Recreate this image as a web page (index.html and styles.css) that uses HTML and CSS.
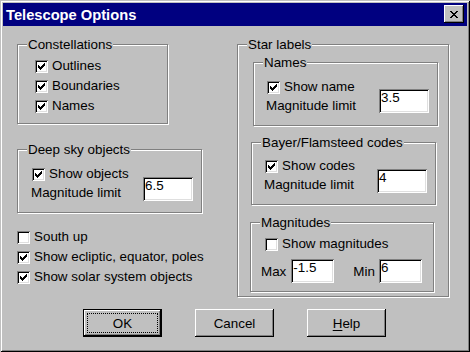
FILE: index.html
```html
<!DOCTYPE html>
<html lang="en">
<head>
<meta charset="utf-8">
<title>Telescope Options</title>
<link rel="stylesheet" href="styles.css">
</head>
<body>
<svg class="sprite" width="0" height="0" aria-hidden="true">
  <symbol id="chk" viewBox="0 0 7 7">
    <path d="M6 0h1v1h-1zM5 1h2v1h-2zM0 2h1v1h-1zM4 2h3v1h-3zM0 3h2v1h-2zM3 3h3v1h-3zM0 4h5v1h-5zM1 5h3v1h-3zM2 6h1v1h-1z"/>
  </symbol>
</svg>
<div class="window">
  <div class="titlebar">
    <span class="title">Telescope Options</span>
    <span class="close"><svg width="8" height="7" viewBox="0 0 8 7"><path d="M0 0h2v1H0zM6 0h2v1H6zM1 1h2v1H1zM5 1h2v1H5zM2 2h4v1H2zM3 3h2v1H3zM2 4h4v1H2zM1 5h2v1H1zM5 5h2v1H5zM0 6h2v1H0zM6 6h2v1H6z"/></svg></span>
  </div>
  <div class="body">
    <div class="col-left">
      <fieldset class="group g-const">
        <legend>Constellations</legend>
        <div class="inner">
          <label class="check"><span class="box"><svg><use href="#chk"/></svg></span>Outlines</label>
          <label class="check"><span class="box"><svg><use href="#chk"/></svg></span>Boundaries</label>
          <label class="check"><span class="box"><svg><use href="#chk"/></svg></span>Names</label>
        </div>
      </fieldset>
      <fieldset class="group g-deep">
        <legend>Deep sky objects</legend>
        <div class="inner limit">
          <div class="stack">
            <label class="check"><span class="box"><svg><use href="#chk"/></svg></span>Show objects</label>
            <span class="caption">Magnitude limit</span>
          </div>
          <input class="field" type="text" value="6.5">
        </div>
      </fieldset>
      <div class="options">
        <label class="check"><span class="box"></span>South up</label>
        <label class="check"><span class="box"><svg><use href="#chk"/></svg></span>Show ecliptic, equator, poles</label>
        <label class="check"><span class="box"><svg><use href="#chk"/></svg></span>Show solar system objects</label>
      </div>
    </div>
    <fieldset class="group g-star">
      <legend>Star labels</legend>
      <fieldset class="group g-names">
        <legend>Names</legend>
        <div class="inner limit">
          <div class="stack">
            <label class="check"><span class="box"><svg><use href="#chk"/></svg></span>Show name</label>
            <span class="caption">Magnitude limit</span>
          </div>
          <input class="field" type="text" value="3.5">
        </div>
      </fieldset>
      <fieldset class="group g-bayer">
        <legend>Bayer/Flamsteed codes</legend>
        <div class="inner limit">
          <div class="stack">
            <label class="check"><span class="box"><svg><use href="#chk"/></svg></span>Show codes</label>
            <span class="caption">Magnitude limit</span>
          </div>
          <input class="field" type="text" value="4">
        </div>
      </fieldset>
      <fieldset class="group g-mags">
        <legend>Magnitudes</legend>
        <div class="inner">
          <label class="check"><span class="box"></span>Show magnitudes</label>
          <div class="minmax">
            <span class="mm-label">Max</span>
            <input class="field small" type="text" value="-1.5">
            <span class="mm-label mm-min">Min</span>
            <input class="field small" type="text" value="6">
          </div>
        </div>
      </fieldset>
    </fieldset>
  </div>
  <div class="buttons">
    <button class="btn default" type="button">OK</button>
    <button class="btn" type="button">Cancel</button>
    <button class="btn" type="button"><u>H</u>elp</button>
  </div>
</div>
</body>
</html>
```
FILE: styles.css
```css
* { box-sizing: border-box; }
html, body { margin: 0; padding: 0; }
body {
  background: #c0c0c0;
  font-family: "Liberation Sans", Arial, sans-serif;
  font-size: 13.4px;
  color: #000;
}
.sprite { display: block; width: 0; height: 0; overflow: hidden; }

.window {
  width: 470px;
  height: 352px;
  padding: 3px;
  background: #c0c0c0;
  box-shadow: inset 1px 1px 0 #c0c0c0, inset -1px -1px 0 #000,
              inset 2px 2px 0 #fff, inset -2px -2px 0 #808080;
}

.titlebar {
  height: 23px;
  background: #000080;
  color: #fff;
  display: flex;
  align-items: center;
  justify-content: space-between;
  padding: 0 3px 0 3px;
  font-size: 14.7px;
  font-weight: bold;
}
.close {
  align-self: flex-start;
  margin-top: 2px;
  width: 20px;
  height: 18px;
  background: #c0c0c0;
  box-shadow: inset -1px -1px 0 #000, inset 1px 1px 0 #fff, inset -2px -2px 0 #808080;
  display: flex;
  align-items: center;
  justify-content: center;
}
.close svg { display: block; fill: #000; }

.body {
  display: flex;
  padding: 11px 0 0 14px;
}
.col-left { width: 220px; flex: none; }

.group {
  margin: 0;
  padding: 0;
  min-width: 0;
  border: 1px solid #808080;
  box-shadow: 1px 1px 0 #fff, inset 1px 1px 0 #fff;
}
.group > legend {
  margin-left: 9px;
  padding: 0 1px;
  height: 15px;
  line-height: 15px;
  background: #c0c0c0;
}

.g-const { width: 151px; height: 87px; }
.g-const .inner { padding: 4px 0 0 17px; }
.g-deep { width: 185px; height: 71px; margin-top: 18px; }
.g-deep .inner { padding: 7px 0 0 14px; }

.g-star { width: 212px; height: 260px; flex: none; }
.g-names { width: 185px; height: 71px; margin: 3px 0 0 15px; }
.g-names .inner { padding: 7px 0 0 13px; }
.g-bayer { width: 185px; height: 70px; margin: 9px 0 0 13px; }
.g-bayer .inner { padding: 6px 0 0 13px; }
.g-mags { width: 184px; height: 77px; margin: 10px 0 0 12px; }
.g-mags .inner { padding: 4px 0 0 14px; }

.check {
  display: flex;
  align-items: flex-start;
  height: 20px;
  line-height: 20px;
  white-space: nowrap;
}
.box {
  flex: none;
  width: 13px;
  height: 13px;
  margin: 4px 4px 0 0;
  background: #fff;
  box-shadow: inset 1px 1px 0 #808080, inset -1px -1px 0 #fff,
              inset 2px 2px 0 #000, inset -2px -2px 0 #dfdfdf;
  display: flex;
  align-items: center;
  justify-content: center;
}
.box svg { display: block; width: 7px; height: 7px; fill: #000; }

.limit { display: flex; }
.stack { width: 112px; flex: none; }
.g-deep .stack { width: 111px; }
.caption { display: block; line-height: 18px; margin-left: -1px; }

.field {
  display: block;
  width: 50px;
  height: 24px;
  margin: 12px 0 0 0;
  padding: 0 2px 8px;
  border: 0;
  font: inherit;
  line-height: 16px;
  color: #000;
  background: #fff;
  outline: none;
  box-shadow: inset 1px 1px 0 #808080, inset -1px -1px 0 #fff,
              inset 2px 2px 0 #000, inset -2px -2px 0 #dfdfdf;
}
.g-deep .field, .g-bayer .field { margin-top: 13px; }

.options { margin-top: 14px; }

.minmax { display: flex; align-items: center; margin-top: 5px; margin-left: -4px; }
.minmax .field { margin: 0 0 0 5px; }
.field.small { width: 43px; }
.mm-min { margin-left: 19px; }
.mm-min + .field { margin-left: 4px; }

.buttons {
  display: flex;
  gap: 33px;
  padding-left: 80px;
  margin-top: 12px;
}
.btn {
  width: 79px;
  height: 28px;
  padding: 0;
  border: 0;
  font: inherit;
  color: #000;
  background: #c0c0c0;
  box-shadow: inset -1px -1px 0 #000, inset 1px 1px 0 #fff, inset -2px -2px 0 #808080;
}
.btn.default {
  box-shadow: inset 0 0 0 1px #000, inset -2px -2px 0 #000,
              inset 2px 2px 0 #fff, inset -3px -3px 0 #808080;
  outline: 1px dotted #000;
  outline-offset: -5px;
}
.btn u { text-decoration: underline; text-underline-offset: 2px; }
```
